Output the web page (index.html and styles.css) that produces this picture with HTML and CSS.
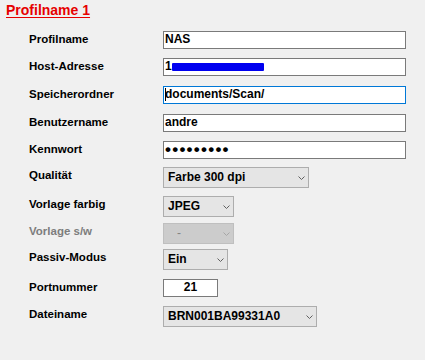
FILE: index.html
```html
<!DOCTYPE html>
<html lang="de">
<head>
<meta charset="utf-8">
<title>Profilname 1</title>
<link rel="stylesheet" href="styles.css">
</head>
<body>
<div class="page">
  <h1 class="title">Profilname 1</h1>
  <div class="form">
    <div class="label">Profilname</div>
    <div class="field"><div class="text wide">NAS</div></div>

    <div class="label">Host-Adresse</div>
    <div class="field"><div class="text wide">1<span class="redact"></span></div></div>

    <div class="label">Speicherordner</div>
    <div class="field"><div class="text wide focus"><span class="caret"></span>documents/Scan/</div></div>

    <div class="label">Benutzername</div>
    <div class="field"><div class="text wide">andre</div></div>

    <div class="label">Kennwort</div>
    <div class="field"><div class="text wide pw">•••••••••</div></div>

    <div class="label">Qualität</div>
    <div class="field"><div class="combo w146"><span>Farbe 300 dpi</span><svg class="chev" width="7" height="4" viewBox="0 0 7 4"><polyline points="0.5,0.5 3.5,3.5 6.5,0.5"/></svg></div></div>

    <div class="label">Vorlage farbig</div>
    <div class="field"><div class="combo w71"><span>JPEG</span><svg class="chev" width="7" height="4" viewBox="0 0 7 4"><polyline points="0.5,0.5 3.5,3.5 6.5,0.5"/></svg></div></div>

    <div class="label disabled">Vorlage s/w</div>
    <div class="field"><div class="combo w71 off"><span class="dash">-</span><svg class="chev" width="7" height="4" viewBox="0 0 7 4"><polyline points="0.5,0.5 3.5,3.5 6.5,0.5"/></svg></div></div>

    <div class="label">Passiv-Modus</div>
    <div class="field"><div class="combo w65"><span>Ein</span><svg class="chev" width="7" height="4" viewBox="0 0 7 4"><polyline points="0.5,0.5 3.5,3.5 6.5,0.5"/></svg></div></div>

    <div class="label">Portnummer</div>
    <div class="field"><div class="text port">21</div></div>

    <div class="label">Dateiname</div>
    <div class="field"><div class="combo w154"><span>BRN001BA99331A0</span><svg class="chev" width="7" height="4" viewBox="0 0 7 4"><polyline points="0.5,0.5 3.5,3.5 6.5,0.5"/></svg></div></div>
  </div>
</div>
</body>
</html>
```
FILE: styles.css
```css
html, body {
  margin: 0;
  padding: 0;
  background: #f0f0f0;
}
body {
  width: 425px;
  height: 360px;
  overflow: hidden;
  font-family: "Liberation Sans", Arial, sans-serif;
  color: #000;
}
.page {
  padding-top: 2px;
}
.title {
  margin: 0;
  padding-left: 6px;
  font-size: 14px;
  line-height: 16px;
  font-weight: bold;
  color: #e60000;
  text-decoration: underline;
  text-underline-offset: 2px;
}
.form {
  margin-top: 13px;
  padding-left: 29px;
  display: grid;
  grid-template-columns: 134px auto;
  grid-template-rows: 27px 28px 28px 27px 26px 29px 27px 26px 30px 27px 21px;
}
.label {
  font-size: 11.5px;
  line-height: 14px;
  font-weight: bold;
  padding-top: 1px;
  white-space: nowrap;
}
.label.disabled {
  color: #7d7d7d;
}
.field {
  display: flex;
  align-items: flex-start;
}
.text {
  box-sizing: border-box;
  height: 18px;
  border: 1px solid #7a7a7a;
  background: #fff;
  font-size: 12px;
  font-weight: bold;
  line-height: 15px;
  padding-left: 1px;
  white-space: nowrap;
  overflow: hidden;
}
.wide {
  width: 243px;
}
.focus {
  border-color: #0078d7;
}
.caret {
  display: inline-block;
  width: 1px;
  height: 13px;
  background: #000;
  vertical-align: -3px;
  margin-right: -1px;
}
.redact {
  display: inline-block;
  width: 92px;
  height: 8px;
  background: #0000f0;
  vertical-align: -1px;
  border-radius: 1px;
}
.pw {
  font-size: 17px;
  letter-spacing: 1.25px;
  line-height: 16px;
}
.port {
  width: 55px;
  text-align: center;
  padding-left: 0;
}
.combo {
  box-sizing: border-box;
  height: 21px;
  border: 1px solid #adadad;
  background: #e5e5e5;
  display: flex;
  align-items: center;
  justify-content: space-between;
  padding: 0 3px 1px 4px;
  font-size: 12px;
  font-weight: bold;
  line-height: 17px;
  white-space: nowrap;
}
.combo .chev {
  fill: none;
  stroke: #606060;
  stroke-width: 1;
  margin-top: 1px;
}
.combo.off {
  background: #cccccc;
  border-color: #bfbfbf;
  color: #838383;
}
.combo.off .chev {
  stroke: #a6a6a6;
}
.dash {
  padding-left: 9px;
  font-weight: normal;
}
.w146 { width: 146px; }
.w71 { width: 71px; }
.w65 { width: 65px; }
.w154 { width: 154px; }
```
